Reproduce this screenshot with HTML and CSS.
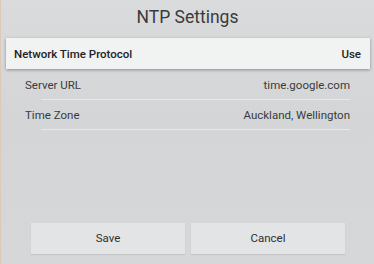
FILE: index.html
```html
<!DOCTYPE html>
<html lang="en">
<head>
	<meta charset="UTF-8">
	<title>NTP Settings</title>
	<link rel="stylesheet" href="styles.css">
</head>
<body>
	<div id="dialog">
		<h1 id="title">NTP Settings</h1>
		<div class="row focus">
			<span>Network Time Protocol</span>
			<span>Use</span>
		</div>
		<ul id="list">
			<li class="row">
				<span>Server URL</span>
				<span>time.google.com</span>
			</li>
			<li class="row">
				<span>Time Zone</span>
				<span>Auckland, Wellington</span>
			</li>
		</ul>
		<div id="btns">
			<div class="btn">Save</div>
			<div class="btn">Cancel</div>
		</div>
	</div>
</body>
</html>
```

FILE: styles.css
```css
* {
	margin: 0;
	padding: 0;
	font-family: Roboto, "Liberation Sans", sans-serif;
}
body {
	width: 374px;
	height: 264px;
	overflow: hidden;
	background: #d3d4d6;
}
#dialog {
	display: flex;
	flex-direction: column;
	height: 264px;
	box-sizing: border-box;
	border-left: 1px solid #dcc9b8;
	background: linear-gradient(180deg, #d9dbdc 0%, #d3d5d6 45%, #d6d7d8 100%);
}
#title {
	height: 38px;
	line-height: 34px;
	text-align: center;
	font-size: 17.5px;
	font-weight: normal;
	color: #3a3b3d;
}
.row {
	display: flex;
	justify-content: space-between;
	align-items: center;
	height: 30px;
	font-size: 11.5px;
	color: #2e2f31;
}
.focus {
	margin: 0 4px 0 5px;
	padding: 0 9px 0 8px;
	height: 31px;
	background: #f1f2f2;
	box-shadow: 0 1px 3px rgba(0, 0, 0, 0.35);
	font-weight: 500;
	color: #222325;
}
#list {
	list-style: none;
	padding: 1px 24px 0 24px;
}
#list .row {
	color: #3a3b3d;
	background: linear-gradient(#e6e7e8, #e6e7e8) no-repeat 16px 100% / calc(100% - 16px) 1px;
}
#btns {
	display: flex;
	gap: 6px;
	margin-top: auto;
	margin-bottom: 10px;
	padding: 0 29px 0 30px;
}
.btn {
	flex: 1;
	height: 31px;
	line-height: 31px;
	text-align: center;
	font-size: 11.5px;
	color: #2e2f31;
	background: #e3e4e5;
	box-shadow: 0 1px 1px rgba(0, 0, 0, 0.08);
}
```
